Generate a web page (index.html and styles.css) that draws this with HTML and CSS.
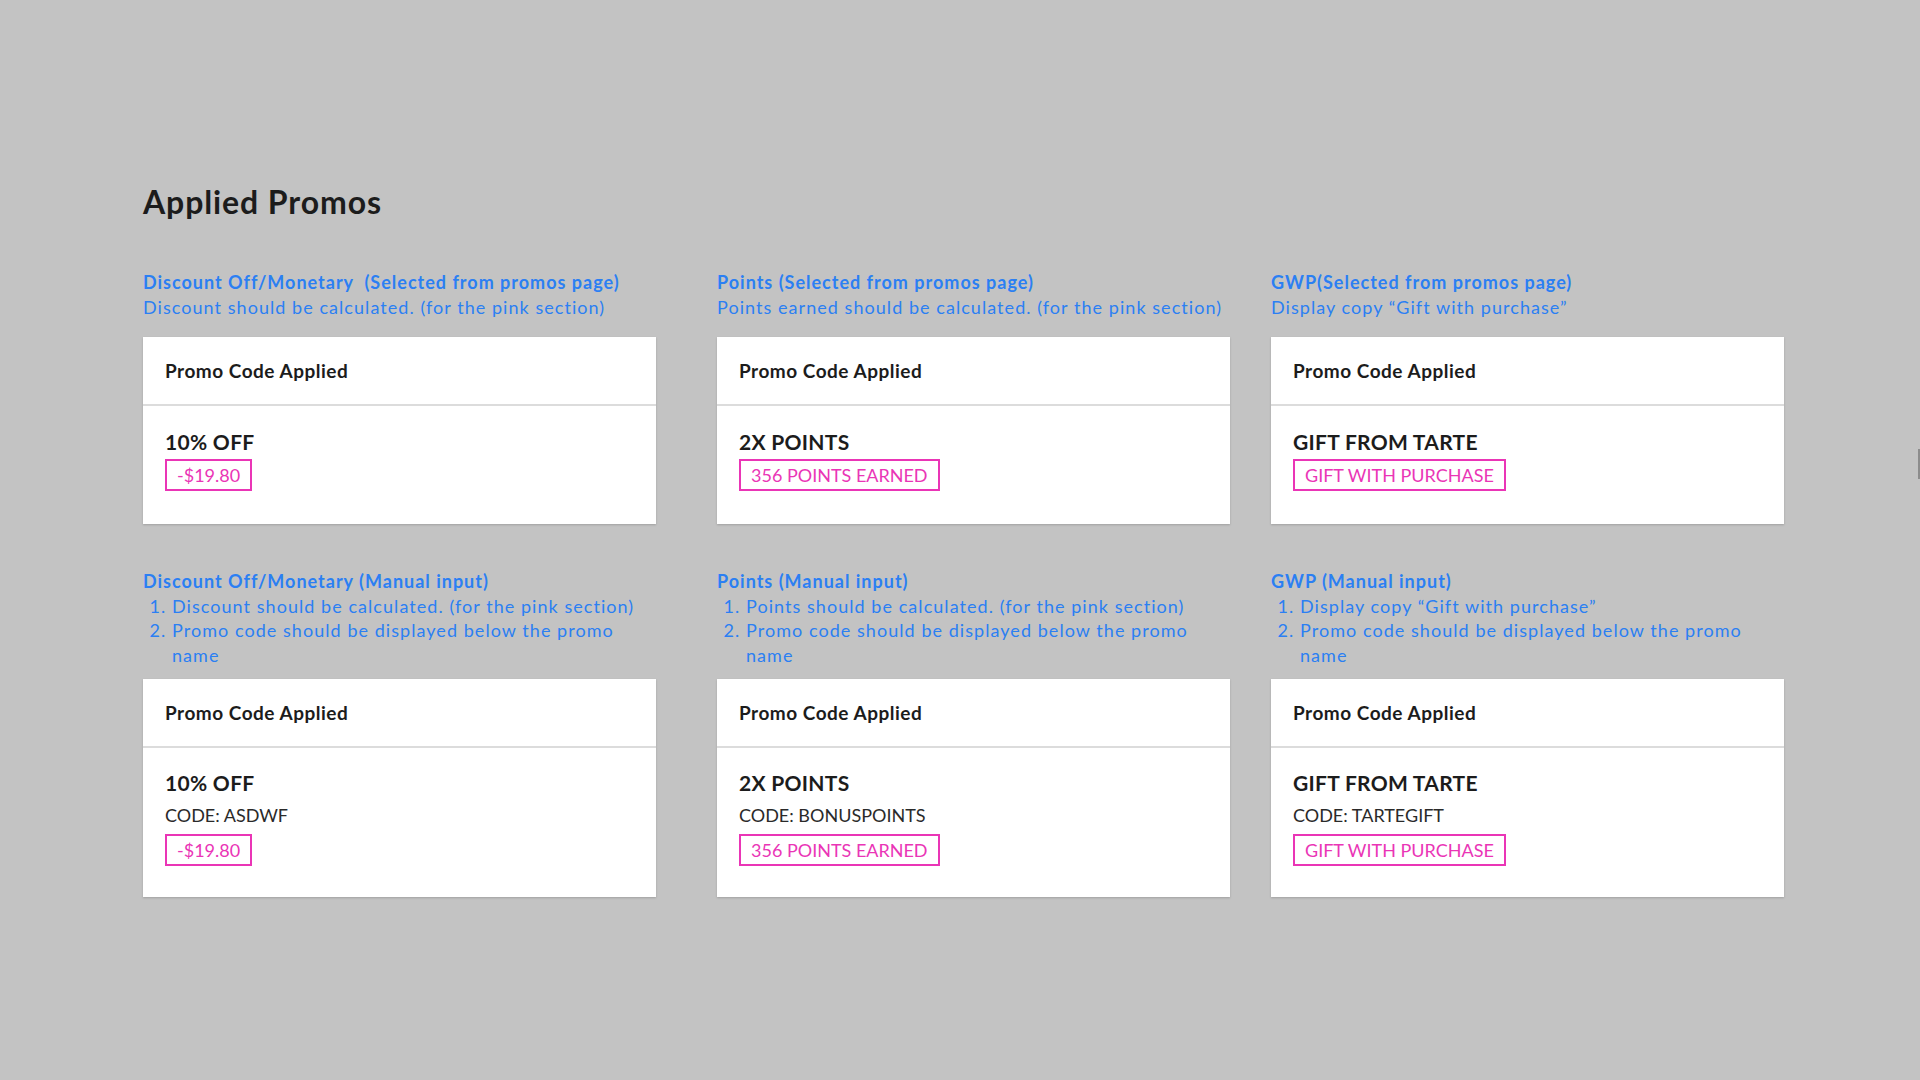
FILE: index.html
```html
<!DOCTYPE html>
<html lang="en">
<head>
    <meta charset="UTF-8">
    <meta name="viewport" content="width=device-width, initial-scale=1.0">
    <title>Applied Promos</title>
    <link rel="stylesheet" href="styles.css">
</head>
<body>
    <div class="page">
        <h1>Applied Promos</h1>

        <div class="row row-auto">
            <div class="col">
                <div class="note">
                    <div class="note-title">Discount Off/Monetary&nbsp; (Selected from promos page)</div>
                    <div>Discount should be calculated. (for the pink section)</div>
                </div>
                <div class="card">
                    <div class="card-head">Promo Code Applied</div>
                    <div class="card-body">
                        <div class="promo-name">10% OFF</div>
                        <span class="promo-tag">-$19.80</span>
                    </div>
                </div>
            </div>
            <div class="col">
                <div class="note">
                    <div class="note-title">Points (Selected from promos page)</div>
                    <div>Points earned should be calculated. (for the pink section)</div>
                </div>
                <div class="card">
                    <div class="card-head">Promo Code Applied</div>
                    <div class="card-body">
                        <div class="promo-name">2X POINTS</div>
                        <span class="promo-tag">356 POINTS EARNED</span>
                    </div>
                </div>
            </div>
            <div class="col">
                <div class="note">
                    <div class="note-title">GWP(Selected from promos page)</div>
                    <div>Display copy &ldquo;Gift with purchase&rdquo;</div>
                </div>
                <div class="card">
                    <div class="card-head">Promo Code Applied</div>
                    <div class="card-body">
                        <div class="promo-name">GIFT FROM TARTE</div>
                        <span class="promo-tag">GIFT WITH PURCHASE</span>
                    </div>
                </div>
            </div>
        </div>

        <div class="row row-manual">
            <div class="col">
                <div class="note">
                    <div class="note-title">Discount Off/Monetary (Manual input)</div>
                    <ol>
                        <li>Discount should be calculated. (for the pink section)</li>
                        <li>Promo code should be displayed below the promo name</li>
                    </ol>
                </div>
                <div class="card">
                    <div class="card-head">Promo Code Applied</div>
                    <div class="card-body">
                        <div class="promo-name">10% OFF</div>
                        <div class="promo-code">CODE: ASDWF</div>
                        <span class="promo-tag">-$19.80</span>
                    </div>
                </div>
            </div>
            <div class="col">
                <div class="note">
                    <div class="note-title">Points (Manual input)</div>
                    <ol>
                        <li>Points should be calculated. (for the pink section)</li>
                        <li>Promo code should be displayed below the promo name</li>
                    </ol>
                </div>
                <div class="card">
                    <div class="card-head">Promo Code Applied</div>
                    <div class="card-body">
                        <div class="promo-name">2X POINTS</div>
                        <div class="promo-code">CODE: BONUSPOINTS</div>
                        <span class="promo-tag">356 POINTS EARNED</span>
                    </div>
                </div>
            </div>
            <div class="col">
                <div class="note">
                    <div class="note-title">GWP (Manual input)</div>
                    <ol>
                        <li>Display copy &ldquo;Gift with purchase&rdquo;</li>
                        <li>Promo code should be displayed below the promo name</li>
                    </ol>
                </div>
                <div class="card">
                    <div class="card-head">Promo Code Applied</div>
                    <div class="card-body">
                        <div class="promo-name">GIFT FROM TARTE</div>
                        <div class="promo-code">CODE: TARTEGIFT</div>
                        <span class="promo-tag">GIFT WITH PURCHASE</span>
                    </div>
                </div>
            </div>
        </div>
    </div>
    <div class="scroll-handle"></div>
</body>
</html>
```

FILE: styles.css
```css
body {
    font-family: Lato, "Noto Sans", sans-serif;
    background-color: #c3c3c3;
    color: #1c1c1c;
    margin: 0;
    min-height: 100vh;
}
.page {
    padding: 182px 0 0 143px;
}
h1 {
    font-size: 32px;
    line-height: 40px;
    font-weight: 700;
    letter-spacing: 0.9px;
    margin: 0 0 48px;
}
.row {
    display: grid;
    grid-template-columns: 574px 554px 513px;
}
.row-manual {
    margin-top: 45px;
}
.note {
    width: 508px;
    color: #2b7ff3;
    font-size: 18px;
    line-height: 24.5px;
    letter-spacing: 1.05px;
    margin-bottom: 18px;
}
.row-manual .note {
    margin-bottom: 12px;
}
.note-title {
    font-weight: 700;
    letter-spacing: 1px;
}
.note ol {
    margin: 0;
    padding-left: 29px;
}
.card {
    width: 513px;
    background-color: white;
    box-shadow: 0 1px 2px rgba(0, 0, 0, 0.18);
}
.card-head {
    font-size: 19px;
    line-height: 22px;
    font-weight: 700;
    letter-spacing: 0.5px;
    padding: 23px 22px 22px;
    border-bottom: 2px solid #dcdcdc;
}
.card-body {
    padding: 23px 22px 33px;
}
.row-manual .card-body {
    padding: 22px 22px 31px;
}
.promo-name {
    font-size: 21px;
    line-height: 25px;
    font-weight: 700;
    letter-spacing: 0.3px;
}
.promo-code {
    font-size: 18px;
    line-height: 24px;
    color: #2a2a2a;
    margin-top: 8px;
}
.promo-tag {
    display: inline-block;
    margin-top: 5px;
    height: 32px;
    line-height: 28px;
    padding: 0 10px;
    border: 2px solid #ea35b6;
    color: #ea35b6;
    font-size: 18px;
    box-sizing: border-box;
}
.row-manual .promo-tag {
    margin-top: 7px;
}
.scroll-handle {
    position: fixed;
    right: 0;
    top: 449px;
    width: 2px;
    height: 30px;
    background-color: #8c8c8c;
}
```
